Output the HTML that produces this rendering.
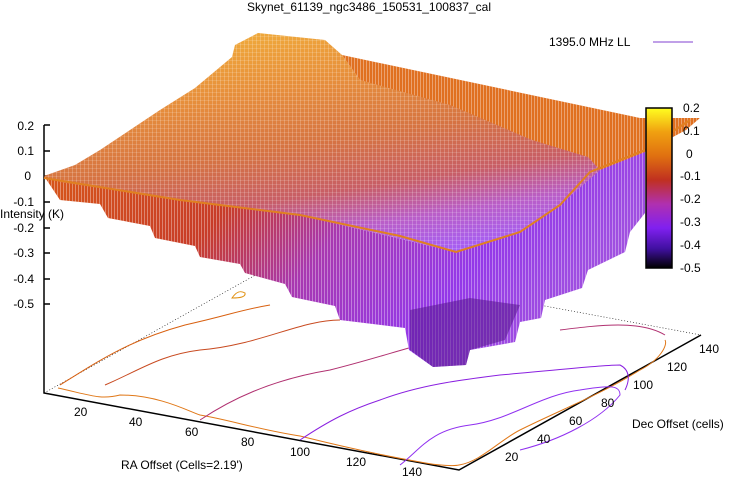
<!DOCTYPE html>
<html><head><meta charset="utf-8"><style>
html,body{margin:0;padding:0;background:#fff;width:738px;height:478px;overflow:hidden}
text{font-family:"Liberation Sans",sans-serif;font-size:12px;fill:#000}
</style></head><body>
<svg width="738" height="478" viewBox="0 0 738 478" xmlns="http://www.w3.org/2000/svg">
<defs>
<linearGradient id="top" x1="0.3" y1="0" x2="0.7" y2="1">
<stop offset="0" stop-color="#eea020"/>
<stop offset="0.25" stop-color="#e48020"/>
<stop offset="0.5" stop-color="#d06028"/>
<stop offset="0.7" stop-color="#c04850"/>
<stop offset="0.85" stop-color="#b048c0"/>
<stop offset="1" stop-color="#9a48f0"/>
</linearGradient>
<linearGradient id="skirt" x1="0" y1="0" x2="1" y2="0.3">
<stop offset="0" stop-color="#d85818"/>
<stop offset="0.35" stop-color="#c83c28"/>
<stop offset="0.55" stop-color="#a838b0"/>
<stop offset="0.8" stop-color="#9438e8"/>
<stop offset="1" stop-color="#a050e0"/>
</linearGradient>
<linearGradient id="cb" x1="0" y1="0" x2="0" y2="1">
<stop offset="0" stop-color="#ffff20"/>
<stop offset="0.15" stop-color="#f0a010"/>
<stop offset="0.3" stop-color="#e07010"/>
<stop offset="0.45" stop-color="#c03020"/>
<stop offset="0.6" stop-color="#b030b0"/>
<stop offset="0.75" stop-color="#8020f0"/>
<stop offset="0.88" stop-color="#4010a0"/>
<stop offset="1" stop-color="#000000"/>
</linearGradient>
<pattern id="mesh" width="4" height="4" patternUnits="userSpaceOnUse">
<rect width="4" height="4" fill="#fff" opacity="0.12"/>
<rect width="1" height="4" fill="#fff" opacity="0.2"/>
<rect width="4" height="1" fill="#fff" opacity="0.15"/>
</pattern>
<pattern id="vl" width="3" height="10" patternUnits="userSpaceOnUse">
<rect width="1" height="10" fill="#fff" opacity="0.35"/>
</pattern>
</defs>

<polyline points="44,125 44,393 459,470 701,335" fill="none" stroke="#000" stroke-width="1.5"/>
<polyline points="44,393 286,258 701,335" fill="none" stroke="#000" stroke-width="0.6" stroke-dasharray="1,2"/>
<g stroke="#000" stroke-width="1.5">
<line x1="44" y1="125" x2="50" y2="125"/><line x1="44" y1="151" x2="50" y2="151"/><line x1="44" y1="176" x2="50" y2="176"/>
<line x1="44" y1="202" x2="50" y2="202"/><line x1="44" y1="228" x2="50" y2="228"/><line x1="44" y1="253" x2="50" y2="253"/>
<line x1="44" y1="279" x2="50" y2="279"/><line x1="44" y1="304" x2="50" y2="304"/>
</g>

<g fill="none" stroke-width="1">
<path d="M58,388 C90,395 100,400 120,395 C160,395 190,412 200,415 C230,420 260,430 300,436 C340,446 380,455 420,462 C440,466 455,466 459,465 C480,462 500,440 520,430 C560,410 600,395 640,370 C660,360 668,345 665,340" stroke="#e07818"/>
<path d="M60,385 C100,360 130,340 185,325 C230,315 240,310 270,305" stroke="#d86010"/>
<path d="M105,385 C140,370 160,355 200,350 C260,345 300,320 340,320" stroke="#c84a20"/>
<path d="M200,420 C230,400 270,380 330,370 C370,360 400,350 420,345" stroke="#b03070"/>
<path d="M560,330 C600,325 640,320 665,335" stroke="#b03070"/>
<path d="M300,440 C330,420 350,410 380,400 C420,385 460,380 500,375 C560,370 600,365 620,365 C630,370 630,380 625,390" stroke="#8a20e0"/>
<path d="M400,465 C420,450 430,430 470,425 C510,420 540,395 580,390 C610,385 620,385 620,395 C600,420 560,440 520,450" stroke="#9030f0"/>
<path d="M232,298 C236,292 240,290 245,293 C246,297 240,298 232,298Z" stroke="#e09010"/>
</g>

<polygon points="342,55 640,118 700,118 686,130 645,152 640,200 600,200 532,140 360,80" fill="#e07020"/>
<polygon points="342,55 640,118 700,118 686,130 645,152 640,200 600,200 532,140 360,80" fill="url(#vl)"/>

<polygon points="44,176 60,200 100,204 108,218 150,226 155,238 195,246 200,257 240,264 245,273 285,284 292,297 335,306 340,320 405,328 409,350 433,367 466,365 470,350 515,342 520,322 541,318 545,300 582,288 588,270 625,252 630,232 645,213 645,152 600,170 520,232 456,252 300,215 180,200" fill="url(#skirt)"/>
<polygon points="44,176 60,200 100,204 108,218 150,226 155,238 195,246 200,257 240,264 245,273 285,284 292,297 335,306 340,320 405,328 409,350 433,367 466,365 470,350 515,342 520,322 541,318 545,300 582,288 588,270 625,252 630,232 645,213 645,152 600,170 520,232 456,252 300,215 180,200" fill="url(#vl)"/>
<polygon points="410,310 410,350 433,367 466,365 470,350 505,340 520,305 470,298" fill="#55158a" opacity="0.55"/>

<polygon points="44,176 75,165 100,150 160,110 195,88 232,57 235,45 258,33 325,40 342,55 360,80 450,105 532,140 588,157 600,170 560,205 520,232 456,252 300,215 180,200 60,182" fill="url(#top)"/>
<polygon points="44,176 75,165 100,150 160,110 195,88 232,57 235,45 258,33 325,40 342,55 360,80 450,105 532,140 588,157 600,170 560,205 520,232 456,252 300,215 180,200 60,182" fill="url(#mesh)"/>
<polyline points="44,178 180,200 300,215 400,236 456,252 520,232 560,205 590,172 645,150 690,120" fill="none" stroke="#e08020" stroke-width="2"/>

<rect x="646" y="108" width="26" height="160" fill="url(#cb)" stroke="#000" stroke-width="1.5"/>
<text x="683" y="112">0.2</text><text x="683" y="135">0.1</text><text x="686" y="158">0</text>
<text x="680" y="180">-0.1</text><text x="680" y="203">-0.2</text><text x="680" y="226">-0.3</text>
<text x="680" y="249">-0.4</text><text x="680" y="272">-0.5</text>

<text x="369" y="11" text-anchor="middle">Skynet_61139_ngc3486_150531_100837_cal</text>
<text x="549" y="46">1395.0 MHz LL</text>
<line x1="653" y1="42" x2="693" y2="42" stroke="#8040d0" stroke-width="1"/>

<g text-anchor="end">
<text x="34" y="130">0.2</text><text x="34" y="155">0.1</text><text x="31" y="180">0</text>
<text x="34" y="206">-0.1</text><text x="34" y="232">-0.2</text><text x="34" y="257">-0.3</text>
<text x="34" y="283">-0.4</text><text x="34" y="308">-0.5</text>
</g>
<text x="0" y="218">Intensity (K)</text>

<text x="74" y="416">20</text><text x="129" y="426">40</text><text x="185" y="436">60</text><text x="241" y="446">80</text>
<text x="290" y="456">100</text><text x="346" y="466">120</text><text x="402" y="476">140</text>
<text x="121" y="469">RA Offset (Cells=2.19')</text>
<text x="505" y="461">20</text><text x="537" y="443">40</text><text x="569" y="425">60</text><text x="601" y="407">80</text>
<text x="633" y="389">100</text><text x="667" y="371">120</text><text x="699" y="353">140</text>
<text x="632" y="428">Dec Offset (cells)</text>
</svg>
</body></html>
